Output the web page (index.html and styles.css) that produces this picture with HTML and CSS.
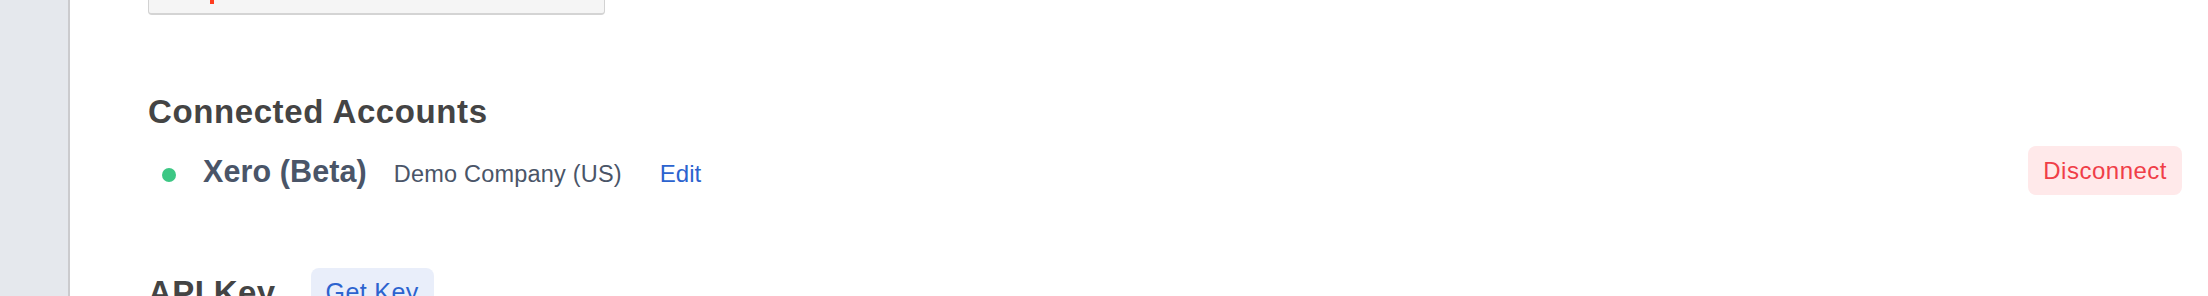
FILE: index.html
```html
<!DOCTYPE html>
<html lang="en">
<head>
<meta charset="utf-8">
<title>Settings</title>
<link rel="stylesheet" href="styles.css">
</head>
<body>
<div class="layout">
  <aside class="sidebar"></aside>
  <main class="main">
    <div class="field"><span class="field-mark"></span></div>

    <h2 class="section-title section-title--first">Connected Accounts</h2>
    <div class="account-row">
      <div class="account">
        <span class="status-dot"></span>
        <span class="account-name">Xero (Beta)</span>
        <span class="account-company">Demo Company (US)</span>
        <a class="account-edit" href="#">Edit</a>
      </div>
      <button class="btn btn-danger" type="button">Disconnect</button>
    </div>

    <div class="api-row">
      <h2 class="section-title">API Key</h2>
      <button class="btn btn-soft" type="button">Get Key</button>
    </div>
  </main>
</div>
</body>
</html>
```

FILE: styles.css
```css
html, body {
  margin: 0;
  padding: 0;
  background: #ffffff;
  height: 296px;
  overflow: hidden;
}

body {
  font-family: "Liberation Sans", Arial, Helvetica, sans-serif;
}

.layout {
  display: flex;
  height: 296px;
}

.sidebar {
  width: 68px;
  flex: 0 0 68px;
  background: #e5e8ed;
  border-right: 2px solid #cbcbce;
}

.main {
  flex: 1;
  padding: 0 26px 0 78px;
  display: flex;
  flex-direction: column;
  min-width: 0;
}

.main > * {
  flex-shrink: 0;
}

.field {
  width: 455px;
  height: 13px;
  background: #f5f5f5;
  border: 1px solid #d2d2d2;
  border-top: none;
  border-bottom: 2px solid #d4d4d4;
  border-radius: 0 0 4px 4px;
}

.field-mark {
  display: block;
  width: 4px;
  height: 4px;
  margin-left: 61px;
  background: #ff3d1f;
}

.section-title {
  margin: 0;
  font-size: 33px;
  line-height: 40px;
  font-weight: 700;
  color: #444444;
  letter-spacing: 0.4px;
}

.section-title--first {
  margin-top: 77px;
  letter-spacing: 0.6px;
}

.account-row {
  margin-top: 14px;
  height: 49px;
  display: flex;
  align-items: center;
  justify-content: space-between;
}

.account {
  display: flex;
  align-items: baseline;
  padding-left: 14px;
  color: #4a5568;
}

.status-dot {
  display: inline-block;
  width: 14px;
  height: 14px;
  border-radius: 50%;
  background: #3cc784;
  margin-right: 27px;
}

.account-name {
  font-size: 30.5px;
  font-weight: 700;
  letter-spacing: 0.1px;
  line-height: 36px;
  margin-right: 27px;
}

.account-company {
  font-size: 23.5px;
  letter-spacing: 0.2px;
  margin-right: 38px;
}

.account-edit {
  font-size: 24px;
  color: #2c63cf;
  text-decoration: none;
}

.btn {
  font-family: "Liberation Sans", Arial, Helvetica, sans-serif;
  border: none;
  border-radius: 8px;
  height: 49px;
  padding: 0 15px;
  font-size: 24px;
  line-height: 49px;
  cursor: pointer;
}

.btn-danger {
  background: #ffe9ea;
  color: #f03e48;
  letter-spacing: 0.5px;
}

.btn-soft {
  background: #e9eefa;
  color: #2c63cf;
  font-size: 25px;
  letter-spacing: 0.4px;
}

.api-row {
  margin-top: 73px;
  display: flex;
  align-items: center;
  gap: 35px;
}
```
